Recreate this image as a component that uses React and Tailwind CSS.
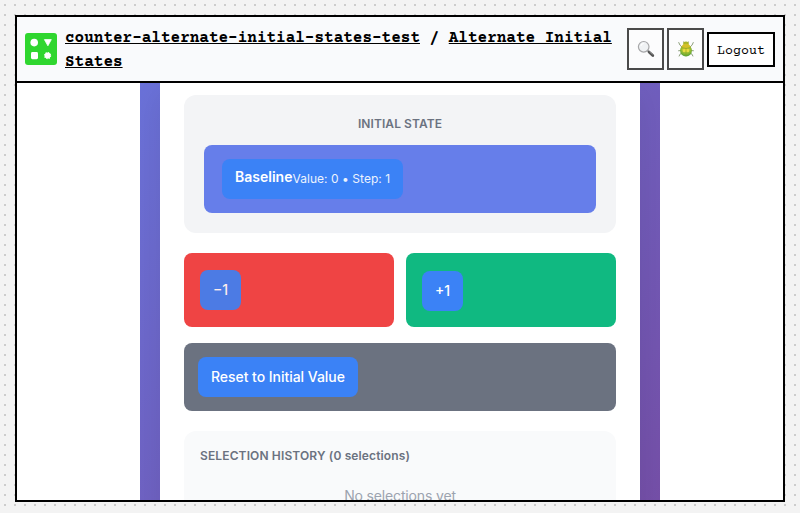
import React from "react";

const chip =
  "flex h-10 items-center rounded-lg bg-[#3b82f6] px-[13px] pb-0.5 text-[14px] font-medium text-white whitespace-nowrap";

function Logo() {
  return (
    <svg className="h-8 w-8 shrink-0" viewBox="0 0 32 32">
      <rect width="32" height="32" rx="3" fill="#2fd62f" />
      <circle cx="9.2" cy="9.6" r="3.8" fill="#fff" />
      <path d="M19.4 6.6h6.9l-3.4 6.2z" fill="#fff" stroke="#fff" strokeWidth="0.8" strokeLinejoin="round" />
      <rect x="6" y="19" width="7" height="7.2" rx="1.4" fill="#fff" />
      <circle cx="22.6" cy="22.6" r="3" fill="#fff" />
      <circle cx="22.6" cy="22.6" r="3" fill="none" stroke="#fff" strokeWidth="1.2" strokeDasharray="1.2 1.15" />
    </svg>
  );
}

function Magnifier() {
  return (
    <svg className="h-[18px] w-[18px]" viewBox="0 0 18 18">
      <path d="M10.6 10.6l1.8 1.8" stroke="#999" strokeWidth="1.8" />
      <path d="M12 12l3.8 3.5" stroke="#555" strokeWidth="2.7" strokeLinecap="round" />
      <path d="M12.4 11.6l3.2 2.8" stroke="#909090" strokeWidth="0.8" />
      <circle cx="6.7" cy="6.8" r="5.3" fill="#f0f2f4" stroke="#a7a7a9" strokeWidth="1.2" />
      <path d="M3.8 5.9a3.4 3.4 0 0 1 3-2.4" stroke="#fff" strokeWidth="1.2" fill="none" />
    </svg>
  );
}

function Beetle() {
  return (
    <svg className="h-[18px] w-[18px]" viewBox="0 0 18 18">
      <defs>
        <radialGradient id="shell" cx="50%" cy="35%" r="65%">
          <stop offset="0" stopColor="#f4d92c" />
          <stop offset="0.5" stopColor="#a8c232" />
          <stop offset="1" stopColor="#52a035" />
        </radialGradient>
      </defs>
      <g fill="none" stroke="#8d9f7c" strokeWidth="1">
        <path d="M5 7L3 5.2 1.6 2.2M13 7l2-1.8 1.4-3" />
        <path d="M4 10.5l-2.8.3M14 10.5l2.8.3" />
        <path d="M5 13l-2 1.2-1 2.2M13 13l2 1.2 1 2.2" />
        <path d="M7.5 3L6 1.6M10.5 3L12 1.6" />
      </g>
      <ellipse cx="9" cy="3.8" rx="2.8" ry="2.2" fill="#a8b52a" />
      <ellipse cx="9" cy="10.6" rx="6" ry="5.8" fill="url(#shell)" />
      <path d="M4.5 7.3Q5 3.7 9 3.7t4.5 3.6Q9 9 4.5 7.3z" fill="#d3c02a" />
      <path d="M4.2 7.6q4.8 1.8 9.6 0M9 8.2v8" stroke="#809d24" strokeWidth="0.6" fill="none" />
      <path d="M5.6 9.3h2.8v2.6H6zM9.6 9.3h2.8l-.4 2.6H9.6z" fill="#f5e04a" opacity="0.8" />
    </svg>
  );
}

function Header() {
  return (
    <header className="flex h-[66px] shrink-0 items-center border-b-2 border-black bg-[#f9fafc] px-2 font-['Courier_Prime','Liberation_Mono',monospace] text-black">
      <Logo />
      <h1 className="ml-2 flex-1 pt-0.5 text-[16px] leading-6 font-bold">
        <a className="underline">counter-alternate-initial-states-test</a> /{" "}
        <a className="underline">Alternate Initial States</a>
      </h1>
      <div className="flex items-center gap-[3px]">
        <button className="flex h-[42px] w-[37px] items-center justify-center border-2 border-[#4a4a4a] bg-[#fcfcfd]">
          <Magnifier />
        </button>
        <button className="flex h-[42px] w-[37px] items-center justify-center border-2 border-[#4a4a4a] bg-[#fcfcfd]">
          <Beetle />
        </button>
        <button className="h-[35px] w-[68px] border-2 border-black bg-white pt-1.5 text-[13.333px] leading-5">Logout</button>
      </div>
    </header>
  );
}

export default function App() {
  return (
    <div className="h-[513px] w-[800px] overflow-hidden bg-[#f3f3f3] bg-[radial-gradient(#ccc_1px,transparent_1px)] bg-[length:10px_10px] px-[15px] pt-[15px]">
      <div className="flex h-[487px] flex-col overflow-hidden border-2 border-black bg-white">
        <Header />
        <div className="flex min-h-0 flex-1 justify-center overflow-hidden font-['Inter',sans-serif]">
          <div className="h-[417px] w-[520px] overflow-hidden bg-[linear-gradient(135deg,#667eea,#764ba2)] bg-[length:520px_870px] bg-[position:0_-340px] px-5">
            <main className="h-[700px] bg-white px-6 pt-3 shadow-[0_10px_30px_rgba(0,0,0,0.08)]">
              <section className="h-[138px] rounded-xl bg-[#f3f4f6] px-5 pt-5">
                <h2 className="h-[30px] text-center text-[12px] leading-[18px] font-semibold tracking-[0.08px] text-[#6b7280]">INITIAL STATE</h2>
                <div className="h-[68px] rounded-lg bg-[#667eea] py-[14px] pl-[18px]">
                  <button className={chip + " w-[181px]"}>
                    <span className="-mt-1 font-semibold">Baseline</span>
                    <span className="mt-0.5 text-[12px] font-normal tracking-[0.05px] opacity-90">Value: 0 • Step: 1</span>
                  </button>
                </div>
              </section>
              <div className="mt-5 grid grid-cols-2 gap-3">
                <div className="h-[74px] rounded-lg bg-[#ef4444] pt-[17px] pl-4">
                  <button className={chip + " w-[41px] justify-center opacity-90"}>−1</button>
                </div>
                <div className="h-[74px] rounded-lg bg-[#10b981] pt-[18px] pl-4">
                  <button className={chip + " w-[41px] justify-center"}>+1</button>
                </div>
              </div>
              <div className="mt-4 h-[68px] rounded-lg bg-[#6b7280] p-[14px]">
                <button className={chip + " w-[160px] tracking-[-0.04px]"}>Reset to Initial Value</button>
              </div>
              <section className="mt-5 h-[200px] rounded-xl bg-[#f9fafb] p-4">
                <h2 className="text-[12px] leading-[18px] font-semibold tracking-[0.13px] text-[#6b7280]">SELECTION HISTORY (0 selections)</h2>
                <p className="mt-[21px] text-center text-[14px] leading-5 tracking-[-0.15px] text-[#9ca3af]">No selections yet</p>
              </section>
            </main>
          </div>
        </div>
      </div>
    </div>
  );
}
